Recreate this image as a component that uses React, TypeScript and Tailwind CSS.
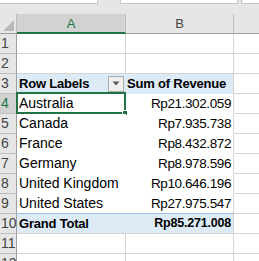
const rows = [
  { n: 1 },
  { n: 2 },
  { n: 3, head: true },
  { n: 4, label: 'Australia', value: 'Rp21.302.059', selected: true },
  { n: 5, label: 'Canada', value: 'Rp7.935.738' },
  { n: 6, label: 'France', value: 'Rp8.432.872' },
  { n: 7, label: 'Germany', value: 'Rp8.978.596' },
  { n: 8, label: 'United Kingdom', value: 'Rp10.646.196' },
  { n: 9, label: 'United States', value: 'Rp27.975.547', beforeTotal: true },
  { n: 10, total: true, label: 'Grand Total', value: 'Rp85.271.008' },
  { n: 11 },
  { n: 12 },
]

type Row = (typeof rows)[number] & {
  head?: boolean
  label?: string
  value?: string
  selected?: boolean
  beforeTotal?: boolean
  total?: boolean
}

const RowHeader = ({ n, selected }: { n: number; selected?: boolean }) => (
  <div
    className={`flex h-[20px] w-[17px] shrink-0 items-center border-r border-b pl-[1px] text-[14px] leading-[19px] ${
      selected
        ? 'border-r-[#217346] border-b-[#bdbdbd] bg-[#d2d2d2] text-[#217346]'
        : 'border-r-[#9f9f9f] border-b-[#bdbdbd] bg-[#e6e6e6] text-[#444444]'
    }`}
  >
    {n}
  </div>
)

const SheetRow = ({ row }: { row: Row }) => {
  const pivot = row.head || row.label
  if (!pivot) {
    return (
      <div className="flex h-[20px]">
        <RowHeader n={row.n} />
        <div className="h-[20px] w-[109px] shrink-0 border-r border-b border-[#d4d4d4]" />
        <div className="h-[20px] w-[108px] shrink-0 border-r border-b border-[#d4d4d4]" />
        <div className="h-[20px] flex-1 border-b border-[#d4d4d4]" />
      </div>
    )
  }

  const blue = row.head || row.total
  const bottom = row.beforeTotal
    ? 'border-b border-[#9bc2e6]'
    : row.total
      ? 'border-b border-[#d4d4d4]'
      : 'border-b border-transparent'

  return (
    <div className="flex h-[20px]">
      <RowHeader n={row.n} selected={row.selected} />
      <div
        className={`relative flex h-[20px] w-[109px] shrink-0 items-center pl-[2px] ${bottom} ${
          blue ? 'bg-[#ddebf7] text-[13px] font-bold tracking-[-0.2px]' : 'bg-white'
        }`}
      >
        <span className="whitespace-nowrap leading-[19px]">{row.head ? 'Row Labels' : row.label}</span>
        {row.head && (
          <div className="ml-auto mr-[2px] flex h-[16px] w-[16px] items-center justify-center border border-[#ababab] bg-[#f0f0f0]">
            <svg width="8" height="5" viewBox="0 0 8 5">
              <path d="M0.5 0.5h7L4 4.5z" fill="#5a5a5a" />
            </svg>
          </div>
        )}
        {row.selected && (
          <div className="absolute left-[-1px] top-[-2px] h-[22px] w-[110px] border-2 border-[#217346]">
            <div className="absolute right-[-4px] bottom-[-4px] h-[6px] w-[6px] border border-white bg-[#217346]" />
          </div>
        )}
      </div>
      <div
        className={`flex h-[20px] w-[108px] shrink-0 items-center border-r border-r-[#d4d4d4] pr-[2px] ${bottom} ${
          blue ? 'bg-[#ddebf7] font-bold' : 'bg-white'
        } ${row.head ? 'justify-start pl-[1px] text-[13px] tracking-[-0.2px]' : 'justify-end'} ${
          row.total ? 'text-[12.5px] tracking-[-0.2px]' : ''
        } ${!blue ? 'text-[13.5px] tracking-[-0.4px]' : ''}`}
      >
        <span className="whitespace-nowrap leading-[19px]">{row.head ? 'Sum of Revenue' : row.value}</span>
      </div>
      <div className="h-[20px] flex-1 border-b border-[#d4d4d4]" />
    </div>
  )
}

export default function App() {
  return (
    <div className="h-[261px] w-[259px] overflow-hidden bg-white font-['Liberation_Sans',Arial,sans-serif] text-[14px] text-black">
      {/* formula bar edge */}
      <div className="flex h-[14px] bg-[#e6e6e6]">
        <div className="h-[4px] w-[98px] border-r border-b border-[#c6c6c6] bg-white" />
        <div className="ml-[22px] h-[4px] w-[118px] border-r border-l border-b border-[#c6c6c6] bg-white" />
        <div className="ml-[3px] h-[4px] flex-1 border-l border-b border-[#c6c6c6] bg-white" />
      </div>

      {/* column headers */}
      <div className="flex h-[20px]">
        <div className="flex h-[20px] w-[17px] shrink-0 items-end justify-end border-r border-b border-r-[#bdbdbd] border-b-[#9f9f9f] bg-[#e6e6e6] pr-[2px] pb-[2px]">
          <svg width="11" height="11" viewBox="0 0 11 11">
            <path d="M11 0V11H0z" fill="#b9b9b9" />
          </svg>
        </div>
        <div className="flex h-[20px] w-[109px] shrink-0 items-center justify-center border-r border-b-2 border-r-[#bdbdbd] border-b-[#217346] bg-[#d2d2d2] pt-[1px] text-[13px] leading-[18px] text-[#217346]">
          A
        </div>
        <div className="flex h-[20px] w-[108px] shrink-0 items-center justify-center border-r border-b border-r-[#bdbdbd] border-b-[#9f9f9f] bg-[#e6e6e6] pt-[1px] text-[13px] leading-[18px] text-[#444444]">
          B
        </div>
        <div className="h-[20px] flex-1 border-b border-[#9f9f9f] bg-[#e6e6e6]" />
      </div>

      {rows.map((r) => (
        <SheetRow key={r.n} row={r as Row} />
      ))}
    </div>
  )
}
